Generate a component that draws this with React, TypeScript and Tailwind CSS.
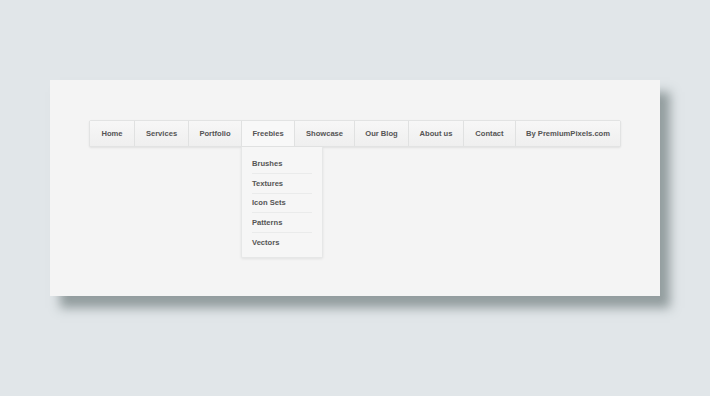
import React from 'react';

const items = [
  { label: 'Home', w: 44 },
  { label: 'Services', w: 54 },
  { label: 'Portfolio', w: 53 },
  { label: 'Freebies', w: 53, active: true },
  { label: 'Showcase', w: 60 },
  { label: 'Our Blog', w: 54 },
  { label: 'About us', w: 55 },
  { label: 'Contact', w: 52 },
  { label: 'By PremiumPixels.com', w: 105 },
];

const subItems = ['Brushes', 'Textures', 'Icon Sets', 'Patterns', 'Vectors'];

const App = () => {
  return (
    <div
      className="w-[710px] h-[396px] bg-[#e1e6e9] pt-[80px] pl-[50px]"
      style={{ fontFamily: '"Liberation Sans", Arial, sans-serif' }}
    >
      <div className="w-[610px] h-[216px] bg-[#f4f4f4] shadow-[10px_12px_10px_rgba(70,85,85,0.5)] pt-[40px] pl-[39px]">
        {/* main nav */}
        <ul className="flex h-[27px] w-fit bg-[#f2f3f3] border border-[#e2e3e3] rounded-[2px] shadow-[0_1px_2px_rgba(0,0,0,0.08)]">
          {items.map((it, i) => (
            <li
              key={it.label}
              style={{ width: it.w }}
              className={
                'relative flex items-center justify-center text-[7.6px] font-bold text-[#555] ' +
                (i > 0 ? 'border-l border-[#e0e1e1] ' : '') +
                (it.active ? 'bg-[#f8f8f8]' : 'bg-gradient-to-b from-[#f7f7f7] to-[#efefef]')
              }
            >
              {it.label}
              {it.active && (
                <div className="absolute left-[-1px] top-[26px] w-[82px] h-[111px] bg-[#f6f6f6] border border-[#e6e7e7] border-t-0 rounded-b-[2px] shadow-[0_1px_3px_rgba(0,0,0,0.08)] pt-[7.5px] px-[10px] z-10">
                  <ul className="flex flex-col">
                    {subItems.map((s, j) => (
                      <li
                        key={s}
                        className={
                          'h-[19.5px] flex items-center text-[7.6px] font-bold text-[#555] text-left ' +
                          (j < subItems.length - 1 ? 'border-b border-[#eaebeb]' : '')
                        }
                      >
                        {s}
                      </li>
                    ))}
                  </ul>
                </div>
              )}
            </li>
          ))}
        </ul>
      </div>
    </div>
  );
};

export default App;
